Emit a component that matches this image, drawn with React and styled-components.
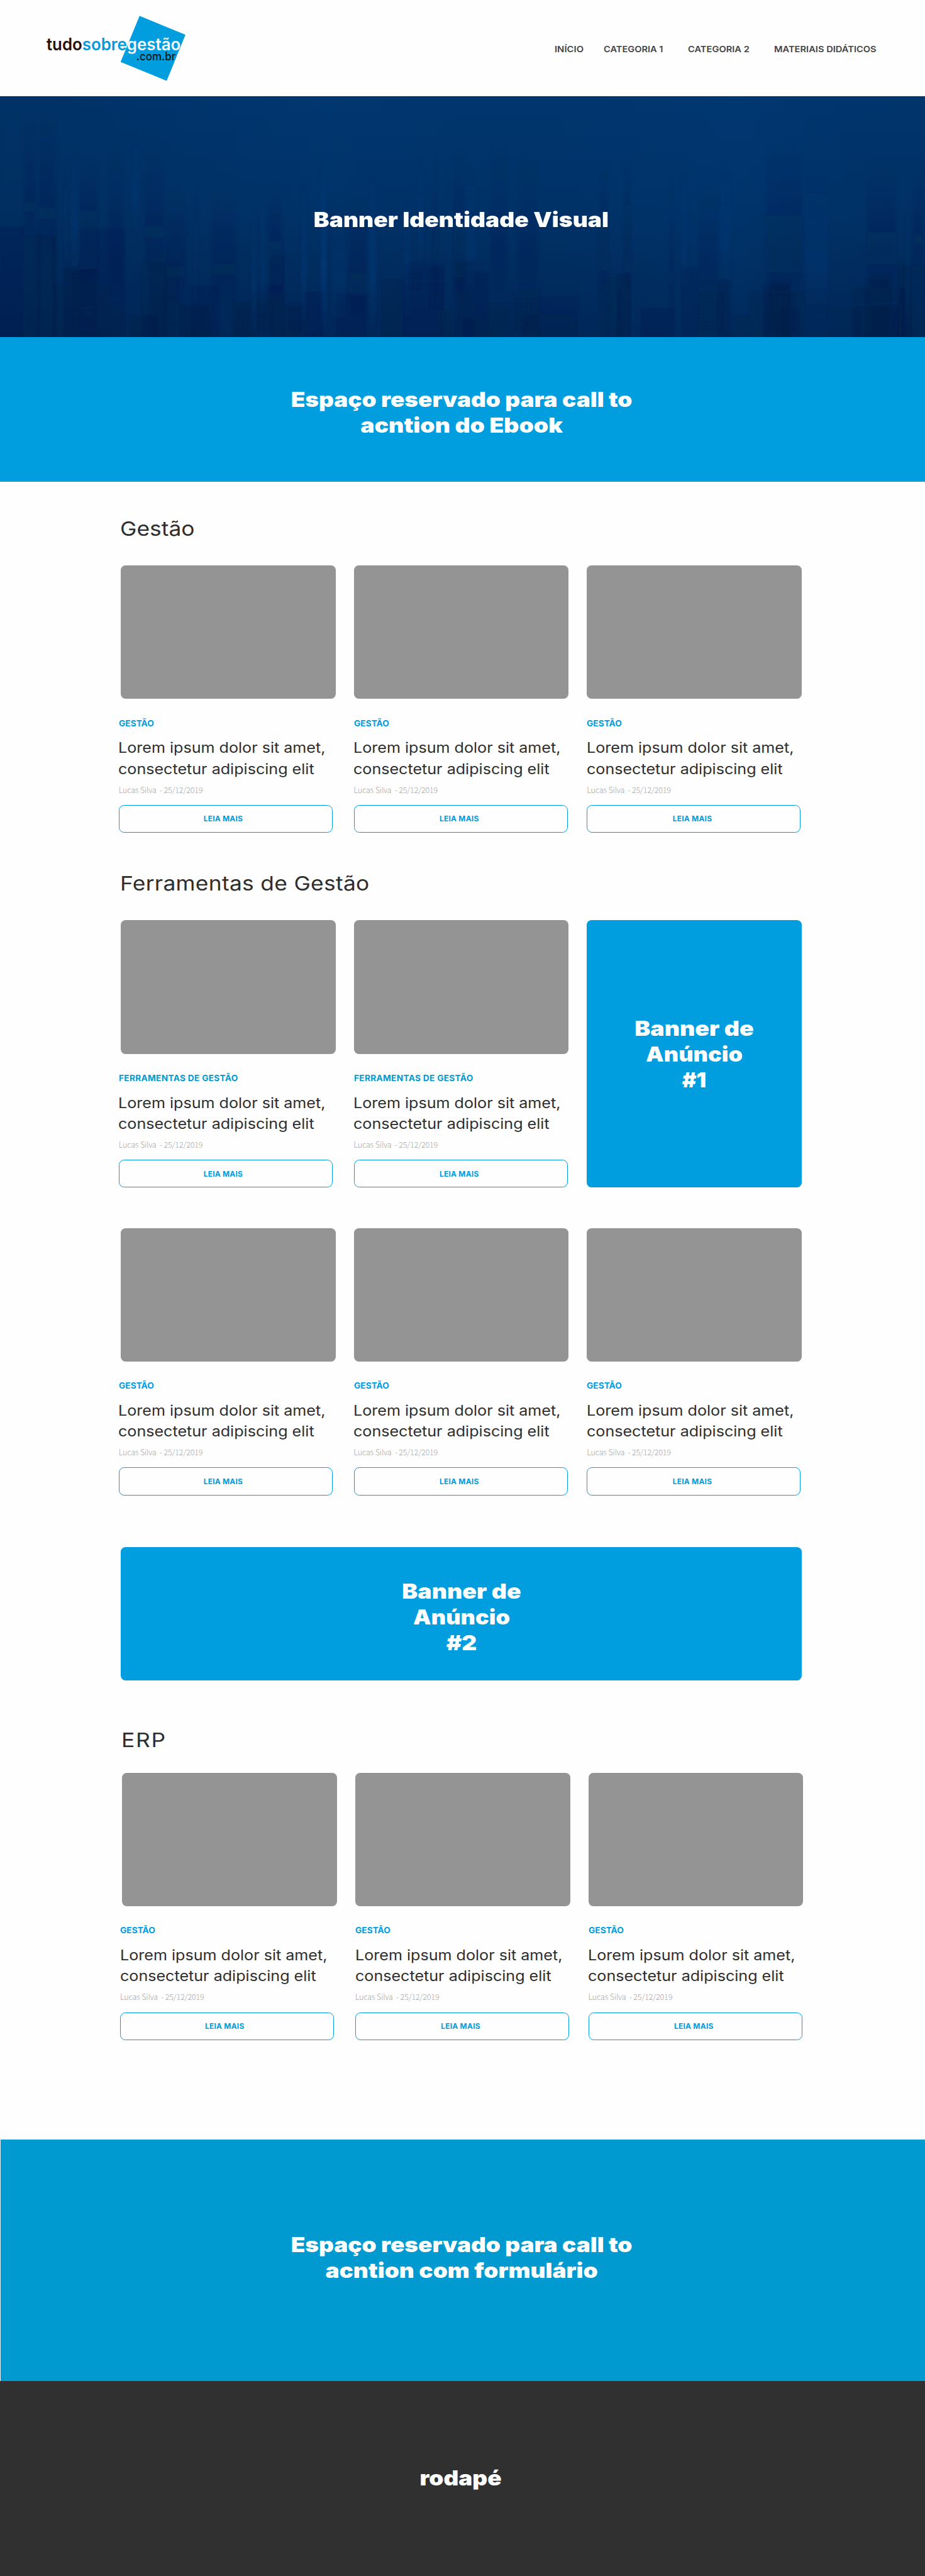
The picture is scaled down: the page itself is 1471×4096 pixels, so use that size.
import React from 'react';
import styled, { createGlobalStyle } from 'styled-components';

// The layout is drawn on a 1920-unit wide grid; u() turns grid units into pixels.
const u = (n) => `${(n * 0.7659).toFixed(2)}px`;

const blue = '#009ddf';
const ink = '#2e2e2e';

const GlobalStyle = createGlobalStyle`
  html, body { margin: 0; padding: 0; background: #fefefe; }
  * { box-sizing: border-box; }
  body { font-family: Inter, "Liberation Sans", sans-serif; color: ${ink}; }
  h1, h2, h3, p { margin: 0; }
`;

const Page = styled.div`
  display: flex;
  flex-direction: column;
  width: 100%;
  overflow: hidden;
`;

const Header = styled.header`
  display: flex;
  justify-content: space-between;
  height: ${u(200)};
  padding: 0 ${u(96)} 0 ${u(90)};
  background: #fefefe;
`;

const LogoMark = styled.svg`
  display: block;
  width: ${u(310)};
  height: ${u(200)};
  font-family: Inter, sans-serif;
  font-weight: 560;
`;

const Nav = styled.nav`
  display: flex;
  align-items: flex-start;
  padding-top: ${u(91)};
`;

const NavLink = styled.a`
  width: ${(p) => u(p.$width)};
  font-size: ${u(18)};
  line-height: ${u(21)};
  font-weight: 620;
  color: #434343;
  white-space: nowrap;
  text-decoration: none;
  transform: scaleX(${(p) => p.$stretch});
  transform-origin: left center;
`;

const Band = styled.section`
  display: flex;
  justify-content: center;
  height: ${(p) => u(p.$height)};
  padding: ${(p) => u(p.$top)} ${u(5)} 0 0;
  background: ${(p) => p.$color};
`;

const FormBand = styled(Band)`
  border-left: 1px solid #e6f5fb;
`;

const Hero = styled.section`
  display: grid;
  height: ${u(500)};
  background: #00316a;
`;

const Skyline = styled.svg`
  grid-area: 1 / 1;
  width: 100%;
  height: ${u(500)};
  display: block;
`;

const HeroContent = styled.div`
  grid-area: 1 / 1;
  z-index: 1;
  display: flex;
  justify-content: center;
  padding: ${u(229.6)} ${u(5)} 0 0;
`;

const Display = styled.h1`
  font-size: ${u(43.4)};
  line-height: ${u(53.8)};
  font-weight: 860;
  color: #fff;
  text-align: center;
  white-space: nowrap;
`;

const DisplayLine = styled.span`
  display: block;
  transform: scaleX(${(p) => p.$stretch || 1.12});
`;

const Main = styled.main`
  display: flex;
  flex-direction: column;
  height: ${u(3441.7)};
  padding: ${u(73)} 0 0 ${u(250.4)};
`;

const Section = styled.section`
  margin: ${(p) => u(p.$gap || 0)} 0 0 ${(p) => u(p.$indent || 0)};
`;

const SectionTitle = styled.h2`
  margin: 0 0 ${(p) => u(p.$after || 50.6)} ${u(-1.2)};
  font-size: ${u(41.6)};
  line-height: ${u(50)};
  font-weight: 400;
  letter-spacing: ${(p) => p.$spacing}px;
  white-space: nowrap;
  transform: scaleX(1.11);
  transform-origin: left center;
`;

const Grid = styled.div`
  display: grid;
  grid-template-columns: repeat(3, ${u(446.3)});
  column-gap: ${u(37.8)};
  margin-top: ${(p) => u(p.$gap || 0)};
`;

const Card = styled.article`
  display: flex;
  flex-direction: column;
  height: ${u(555.2)};
`;

const Thumb = styled.div`
  flex: none;
  height: ${u(277.5)};
  border-radius: ${u(10)};
  background: #949494;
`;

const CardBody = styled.div`
  display: flex;
  flex-direction: column;
  width: ${u(444)};
  margin-left: ${(p) => u(p.$shift)};
  padding-top: ${u(40.8)};
`;

const Category = styled.p`
  font-size: ${u(17)};
  line-height: ${u(20)};
  font-weight: 700;
  letter-spacing: ${(p) => (p.$long ? 0.3 : 0.05)}px;
  color: ${(p) => (p.$long ? '#009bd2' : blue)};
  white-space: nowrap;
  transform: scaleX(1.05);
  transform-origin: left center;
`;

const CardTitle = styled.h3`
  margin: ${u(19)} 0 0 ${u(-0.4)};
  font-size: ${u(29.4)};
  line-height: ${u(43.2)};
  font-weight: 420;
  white-space: nowrap;
  transform: scaleX(1.115);
  transform-origin: left center;
`;

const Meta = styled.p`
  margin: ${u(11.6)} 0 ${u(22.1)};
  font-family: "Noto Sans CJK SC", "Open Sans", sans-serif;
  font-size: ${u(16.4)};
  line-height: ${u(20)};
  font-weight: 300;
  letter-spacing: -0.17px;
  color: #a6a6a6;
  white-space: pre;
`;

const ReadMore = styled.button`
  display: flex;
  align-items: center;
  justify-content: center;
  width: 100%;
  height: ${u(57.8)};
  padding: 0 ${(p) => u(p.$nudge)} 0 0;
  border: 1px solid ${blue};
  border-radius: ${u(11)};
  background: transparent;
  font-family: inherit;
  font-size: ${u(15.6)};
  font-weight: 700;
  letter-spacing: 0.25px;
  color: ${blue};
`;

const Ad = styled.aside`
  display: flex;
  justify-content: center;
  height: ${(p) => u(p.$height)};
  width: ${(p) => u(p.$width)};
  margin-top: ${(p) => u(p.$gap || 0)};
  padding-top: ${(p) => u(p.$top)};
  border-radius: ${u(10)};
  background: ${blue};
`;

const Footer = styled.footer`
  display: flex;
  justify-content: center;
  height: ${u(405)};
  padding: ${u(174.6)} ${u(7)} 0 0;
  background: #303030;
`;

function Logo() {
  return (
    <LogoMark viewBox="90 0 310 200">
      <polygon points="289.7,33 385,72 346,167.7 250.3,128.7" fill={blue} />
      <text x="96.5" y="104.3" fontSize="35" textLength="278.5" lengthAdjust="spacingAndGlyphs">
        <tspan fill="#1d130e">tudo</tspan>
        <tspan fill={blue}>sobre</tspan>
        <tspan fill="#f6f6f6">gestão</tspan>
      </text>
      <text x="283" y="125" fontSize="24" fontWeight="520" textLength="81.5" lengthAdjust="spacingAndGlyphs" fill="#15150f">.com.br</text>
    </LogoMark>
  );
}

// x, width, top, opacity
const towers = [
  [0, 50, 270, 0.25], [49, 67, 290, 0.4], [76, 9, 278, 0.35], [108, 9, 278, 0.3], [132, 70, 356, 0.65],
  [112, 22, 392, 0.35], [165, 95, 275, 0.2], [202, 24, 400, 0.4], [225, 34, 432, 0.35], [294, 76, 345, 0.3],
  [308, 40, 313, 0.3], [270, 60, 455, 0.45], [370, 68, 432, 0.55], [395, 60, 395, 0.2], [483, 42, 425, 0.45],
  [525, 64, 407, 0.4], [588, 46, 432, 0.5], [560, 30, 330, 0.25], [632, 40, 405, 0.25], [700, 60, 409, 0.2],
  [793, 45, 382, 0.45], [838, 84, 347, 0.22], [910, 34, 445, 0.4], [946, 38, 344, 0.55], [984, 30, 365, 0.25],
  [960, 50, 460, 0.4], [1010, 48, 430, 0.45], [1064, 58, 400, 0.3], [1085, 110, 452, 0.35], [1120, 80, 415, 0.18],
  [1244, 20, 382, 0.4], [1262, 47, 370, 0.35], [1280, 28, 370, 0.3], [1330, 70, 440, 0.25], [1414, 36, 355, 0.16],
  [1450, 66, 382, 0.32], [1488, 28, 384, 0.3], [1520, 36, 455, 0.45], [1555, 115, 405, 0.35], [1584, 58, 390, 0.45],
  [1598, 42, 380, 0.45], [1620, 40, 440, 0.35], [1718, 70, 438, 0.3], [1770, 108, 398, 0.45], [1795, 56, 380, 0.4],
  [1808, 40, 368, 0.35], [1795, 75, 435, 0.45], [1863, 57, 350, 0.3], [1868, 26, 338, 0.3],
];

// x, width, top, height, opacity, lit
const streaks = [
  [50, 24, 30, 270, 0.25, 0], [80, 36, 20, 300, 0.25, 0], [134, 4, 130, 230, 0.35, 1], [148, 14, 120, 240, 0.35, 1],
  [166, 36, 130, 250, 0.4, 0], [225, 30, 80, 320, 0.2, 0], [274, 14, 80, 200, 0.3, 1], [300, 40, 90, 260, 0.25, 0],
  [345, 40, 180, 250, 0.25, 0], [404, 4, 160, 330, 0.3, 1], [440, 50, 190, 230, 0.25, 0], [523, 8, 220, 270, 0.55, 1],
  [540, 12, 200, 260, 0.35, 1], [556, 30, 180, 240, 0.35, 0], [626, 9, 180, 290, 0.6, 1], [667, 10, 120, 370, 0.85, 1],
  [688, 30, 230, 240, 0.3, 1], [725, 36, 210, 250, 0.28, 0], [766, 14, 160, 320, 0.6, 1], [838, 14, 200, 260, 0.35, 1],
  [868, 12, 130, 220, 0.3, 1], [900, 8, 120, 280, 0.3, 0], [942, 22, 110, 300, 0.35, 0], [968, 20, 150, 260, 0.3, 1],
  [1018, 34, 100, 300, 0.2, 0], [1075, 40, 120, 280, 0.2, 0], [1244, 17, 140, 250, 0.35, 0], [1296, 12, 130, 250, 0.45, 0],
  [1390, 8, 170, 280, 0.25, 0], [1415, 12, 150, 260, 0.25, 1], [1450, 40, 180, 220, 0.2, 0], [1496, 20, 140, 250, 0.3, 1],
  [1590, 74, 100, 300, 0.35, 0], [1672, 46, 170, 270, 0.35, 1], [1800, 60, 130, 260, 0.3, 0], [1880, 8, 200, 290, 0.3, 1],
  [1895, 20, 130, 230, 0.25, 0],
];

const ledges = [
  [487, 424, 38], [632, 405, 38], [1725, 437, 60], [1785, 432, 80], [1062, 398, 60], [145, 358, 56],
  [164, 440, 34], [168, 452, 28], [164, 484, 28], [845, 385, 90], [850, 350, 74], [1510, 400, 70],
];

const windowGrids = [
  [846, 366, 4, 4, 8, 10], [892, 358, 4, 9, 8, 10], [536, 430, 4, 8, 9, 8], [490, 440, 3, 7, 10, 9],
  [1283, 402, 1, 9, 8, 11], [1070, 420, 5, 9, 10, 8], [340, 418, 3, 9, 9, 9], [1450, 410, 6, 10, 9, 8],
  [150, 368, 2, 12, 10, 10], [1600, 410, 5, 9, 11, 9], [600, 440, 3, 6, 9, 9],
];

function City() {
  return (
    <Skyline viewBox="0 0 1920 500" preserveAspectRatio="none" aria-hidden="true">
      <defs>
        <linearGradient id="sky" x1="0" y1="0" x2="0" y2="1">
          <stop offset="0" stopColor="#003770" />
          <stop offset="0.45" stopColor="#003369" />
          <stop offset="0.75" stopColor="#002c5f" />
          <stop offset="1" stopColor="#002758" />
        </linearGradient>
        <linearGradient id="side" x1="0" y1="0" x2="1" y2="0">
          <stop offset="0" stopColor="#001f47" stopOpacity="0.22" />
          <stop offset="0.35" stopColor="#001f47" stopOpacity="0" />
          <stop offset="0.8" stopColor="#003a75" stopOpacity="0.2" />
          <stop offset="1" stopColor="#001f47" stopOpacity="0.08" />
        </linearGradient>
        <linearGradient id="lit" x1="0" y1="0" x2="0" y2="1">
          <stop offset="0" stopColor="#003e7f" stopOpacity="0" />
          <stop offset="0.65" stopColor="#003e7f" stopOpacity="1" />
          <stop offset="1" stopColor="#003e7f" stopOpacity="0.1" />
        </linearGradient>
        <linearGradient id="shade" x1="0" y1="0" x2="0" y2="1">
          <stop offset="0" stopColor="#002149" stopOpacity="0" />
          <stop offset="0.75" stopColor="#002149" stopOpacity="0.8" />
          <stop offset="1" stopColor="#002149" stopOpacity="0.3" />
        </linearGradient>
        <filter id="soft"><feGaussianBlur stdDeviation="2.5 8" /></filter>
        <filter id="edge"><feGaussianBlur stdDeviation="1.6" /></filter>
      </defs>
      <rect width="1920" height="500" fill="url(#sky)" />
      <rect width="1920" height="500" fill="url(#side)" />
      <g filter="url(#edge)">
        {towers.map(([x, w, y, o], i) => (
          <rect key={i} x={x} y={y} width={w} height={520 - y} fill="#001c45" opacity={o * 0.6} />
        ))}
      </g>
      <g filter="url(#soft)">
        {streaks.map(([x, w, y, h, o, lit], i) => (
          <rect key={i} x={x} y={y} width={w} height={h} fill={lit ? 'url(#lit)' : 'url(#shade)'} opacity={o * 0.8} />
        ))}
      </g>
      <g fill="#003873" opacity="0.3" filter="url(#edge)">
        {ledges.map(([x, y, w], i) => (
          <polygon key={i} points={`${x},${y} ${x + w},${y - 5} ${x + w},${y - 2} ${x},${y + 3}`} />
        ))}
      </g>
      <g fill="#001a42" opacity="0.38" filter="url(#edge)">
        {windowGrids.map(([gx, gy, cols, rows, dx, dy], g) =>
          Array.from({ length: cols * rows }, (_, k) => (
            <rect key={`${g}-${k}`} x={gx + (k % cols) * dx} y={gy + Math.floor(k / cols) * dy} width={dx * 0.6} height={dy * 0.5} />
          ))
        )}
      </g>
    </Skyline>
  );
}

function Post({ category, column }) {
  return (
    <Card>
      <Thumb />
      <CardBody $shift={column === 0 ? -4 : 0}>
        <Category $long={category.length > 8}>{category}</Category>
        <CardTitle>
          Lorem ipsum dolor sit amet,
          <br />
          consectetur adipiscing elit
        </CardTitle>
        <Meta>{'Lucas Silva  - 25/12/2019'}</Meta>
        <ReadMore $nudge={column === 0 ? 10 : 6}>LEIA MAIS</ReadMore>
      </CardBody>
    </Card>
  );
}

function PostRow({ category = 'GESTÃO', count = 3, gap, children }) {
  return (
    <Grid $gap={gap}>
      {Array.from({ length: count }, (_, i) => (
        <Post key={i} category={category} column={i} />
      ))}
      {children}
    </Grid>
  );
}

function Lines({ items }) {
  return (
    <Display>
      {items.map(([text, stretch]) => (
        <DisplayLine key={text} $stretch={stretch}>{text}</DisplayLine>
      ))}
    </Display>
  );
}

const links = [
  ['INÍCIO', 102, 1.08],
  ['CATEGORIA 1', 174, 1.06],
  ['CATEGORIA 2', 178.6, 1.065],
  ['MATERIAIS DIDÁTICOS', 218, 1.065],
];

export default function App() {
  return (
    <>
      <GlobalStyle />
      <Page>
        <Header>
          <Logo />
          <Nav>
            {links.map(([text, width, stretch]) => (
              <NavLink key={text} $width={width} $stretch={stretch}>{text}</NavLink>
            ))}
          </Nav>
        </Header>
        <Hero>
          <City />
          <HeroContent>
            <Lines items={[['Banner Identidade Visual']]} />
          </HeroContent>
        </Hero>
        <Band $height={300} $top={102.6} $color={blue}>
          <Lines items={[['Espaço reservado para call to', 1.112], ['acntion do Ebook', 1.125]]} />
        </Band>
        <Main>
          <Section>
            <SectionTitle $spacing={0}>Gestão</SectionTitle>
            <PostRow />
          </Section>
          <Section $gap={81}>
            <SectionTitle $spacing={0.26}>Ferramentas de Gestão</SectionTitle>
            <PostRow category="FERRAMENTAS DE GESTÃO" count={2}>
              <Ad $height={555.2} $width={446.3} $top={197.8}>
                <Lines items={[['Banner de', 1.128], ['Anúncio', 1.085], ['#1', 1.04]]} />
              </Ad>
            </PostRow>
            <PostRow gap={83.8} />
          </Section>
          <Ad $height={277.3} $width={1414.8} $top={65.2} $gap={107.2}>
            <Lines items={[['Banner de', 1.128], ['Anúncio', 1.085], ['#2']]} />
          </Ad>
          <Section $gap={99} $indent={3}>
            <SectionTitle $spacing={1.6} $after={42.3}>ERP</SectionTitle>
            <PostRow />
          </Section>
        </Main>
        <FormBand $height={501.3} $top={192.2} $color="#009ad0">
          <Lines items={[['Espaço reservado para call to', 1.112], ['acntion com formulário', 1.115]]} />
        </FormBand>
        <Footer>
          <Lines items={[['rodapé', 1.112]]} />
        </Footer>
      </Page>
    </>
  );
}
